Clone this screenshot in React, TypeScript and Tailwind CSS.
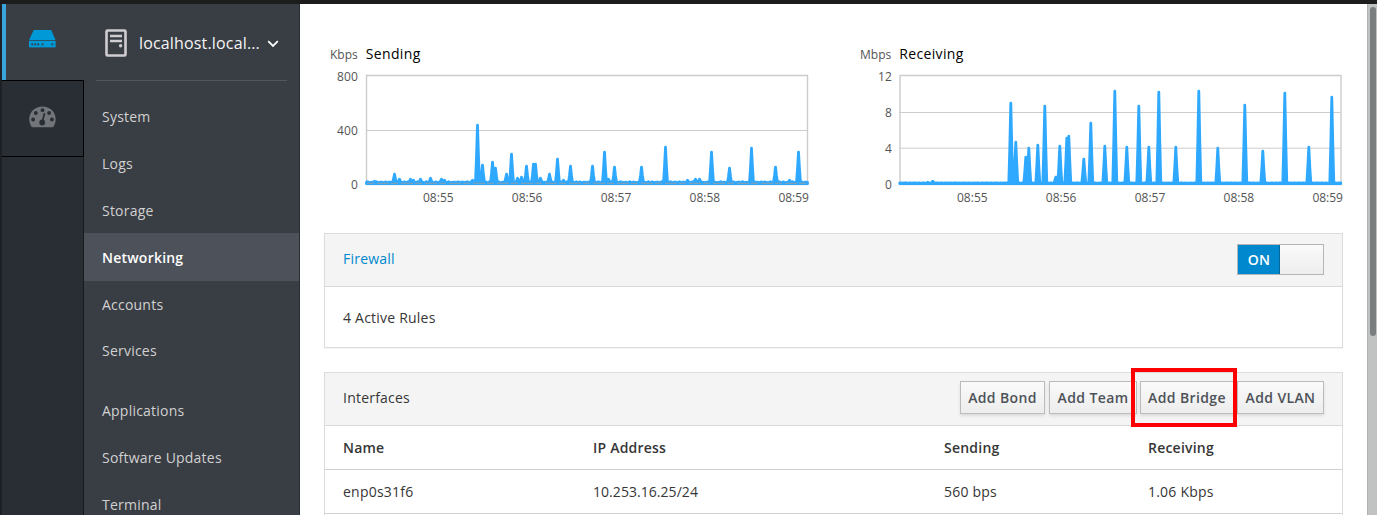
import React from "react";

const NAV = [
  ["System", 0], ["Logs", 0], ["Storage", 0], ["Networking", 0], ["Accounts", 0], ["Services", 1],
  ["Applications", 0], ["Software Updates", 0], ["Terminal", 0],
] as const;

type Spike = [number, number];

const SEND: Spike[] = [
  [8, 2], [28, 9], [33, 4], [44, 4], [47, 3], [54, 4], [64, 5], [75, 4], [78, 3], [106, 3], [111, 58], [116, 18], [126, 21], [129, 15], [140, 9], [145, 29], [151, 5], [155, 6], [160, 17], [167, 19], [169, 19], [174, 5],
  [183, 9], [191, 24], [197, 3], [204, 17], [238, 31], [242, 4], [226, 17], [248, 16], [275, 16], [299, 36], [321, 3], [329, 4], [333, 4], [345, 31], [363, 15], [385, 35], [409, 16], [423, 3], [432, 31],
];
const RECV: Spike[] = [
  [28, 1], [33, 2], [111, 80], [116, 41], [126, 26], [129, 35], [138, 38], [145, 77], [156, 6], [160, 37], [167, 45], [169, 47], [184, 24], [191, 60], [205, 37], [215, 92], [227, 36], [239, 77], [249, 36], [259, 91], [276, 36], [299, 92], [318, 35], [345, 78], [363, 32], [385, 90], [409, 36], [432, 86],
];

function trace(spikes: Spike[], noise: number) {
  let d = "M0 108";
  for (let x = 0; x <= 441; x++) {
    let h = noise * (0.5 + 0.5 * Math.sin(x * 1.7) * Math.cos(x * 0.31));
    for (const [p, a] of spikes) {
      const k = Math.abs(x - p);
      if (k < 2) h = Math.max(h, a * (k === 0 ? 1 : 0.45));
    }
    d += `L${x} ${(107.5 - h).toFixed(1)}`;
  }
  return d + "V108Z";
}

function Chart({ unit, title, ticks, spikes, noise, wide }: {
  unit: string; title: string; ticks: string[]; spikes: Spike[]; noise: number; wide: boolean;
}) {
  return (
    <div className="flex h-[170px] flex-col">
      <div className={`flex h-[20px] items-center gap-2 ${wide ? "w-[483px]" : "w-[479px]"}`}>
        <span className="pt-px text-[12px] tracking-normal text-[#545454]">{unit}</span>
        <span className="-mt-px text-[14px] tracking-[0.35px] text-black">{title}</span>
      </div>
      <div className="mt-[10px] flex h-[110px]">
        <div className={`-mt-[5px] flex h-[124px] shrink-0 flex-col justify-between text-right text-[12px] leading-4 tracking-[0.1px] text-[#545454] ${wide ? "w-[39px] pr-[7px]" : "w-[36px] pr-2"}`}>
          {ticks.map((t) => <span key={t}>{t}</span>)}
        </div>
        <svg width="443" height="111" className="shrink-0 overflow-visible">
          <path d="M.5 1.5H441.5V110.5H.5Z" fill="none" stroke="#ccc" strokeWidth="1.4" transform={wide ? "translate(.5 0)" : "translate(0 0)"} />
          {ticks.slice(1, -1).map((t, i) => {
            const y = Math.round(((i + 1) * 108) / (ticks.length - 1)) + 1.5 + (wide ? i === 0 ? 1 : 0.7 : 1);
            return <path key={t} d={`M0 ${y}H441.5`} stroke="#ccc" />;
          })}
          <path d={trace(spikes, noise)} transform={wide ? "translate(.8 1.7)" : "translate(.5 1.7)"} fill="#2fa8ff" stroke="#2fa8ff" strokeWidth="2.8" strokeLinejoin="round" />
          {!wide && <path d="M1 109.3H441" stroke="#8c9fa8" strokeWidth="1" strokeDasharray="7 3 12 2" />}
        </svg>
      </div>
      <div className={`mt-[5px] flex h-[18px] justify-between text-[12px] leading-[18px] tracking-normal text-[#545454] ${wide ? "ml-[97px] w-[386px]" : "ml-[93px] w-[386px]"}`}>
        {["08:55", "08:56", "08:57", "08:58", "08:59"].map((t) => <span key={t}>{t}</span>)}
      </div>
    </div>
  );
}

function Btn({ children, className }: { children: React.ReactNode; className: string }) {
  return (
    <button className={`flex h-[33px] items-center justify-center border border-[#bbb] bg-linear-to-b from-[#fafafa] to-[#ededed] text-[14px] font-semibold tracking-[0.38px] whitespace-nowrap text-[#4d5258] shadow-[0_2px_3px_rgba(3,3,3,0.1)] ${className}`}>
      {children}
    </button>
  );
}

export default function App() {
  return (
    <div className="flex h-[515px] w-[1377px] flex-col overflow-hidden bg-white font-['Open_Sans',sans-serif] text-[14px] tracking-[0.22px] text-[#363636]">
      <div className="h-[4px] shrink-0 bg-[#1d1d1e]" />
      <div className="flex h-[511px]">
        <aside className="flex w-[300px] shrink-0 border-r border-l-2 border-r-[#292e34] border-l-[#1d2024] bg-[#393d44]">
          <div className="flex w-[82px] flex-col">
            <div className="flex h-[76px] items-center border-l-4 border-[#39a5dc] pb-[5px] pl-[23px]">
              <svg width="27" height="18" viewBox="0 0 27 18" fill="#0099d8" className="-mt-px">
                <path d="M4.7 0H22.2L26.6 10.2H0Z" />
                <path d="M0 11H26.6V17.4H0Z" />
                <path d="M2.3 13.4h1.9v1.8H2.3zM5.2 13.4h1.9v1.8H5.2zM8.2 13.4h1.9v1.8H8.2zM12.6 13.4h1.9v1.8h-1.9zM22.4 13.4h1.9v1.8h-1.9z" fill="#393d44" />
              </svg>
            </div>
            <div className="flex h-[77px] items-center border-y border-r border-black bg-[#292e34] pb-[4px] pl-[27px]">
              <svg width="27" height="22" viewBox="0 0 27 22">
                <path d="M3 21.3C-1.6 15 0 7.3 4.8 3.6C10 -.6 17-.6 22.2 3.6C27 7.4 28.5 15 24 21.3Z" fill="#72767b" />
                <g fill="#292e34"><circle cx="4.1" cy="13.5" r="1.9" /><circle cx="6.8" cy="7" r="1.9" /><circle cx="13.5" cy="4.2" r="1.9" /><circle cx="20.1" cy="7" r="1.9" /><circle cx="22.9" cy="13.5" r="1.9" /><circle cx="13.2" cy="16.5" r="2.9" /></g>
                <path d="M13.2 16L15.4 7.8" stroke="#292e34" strokeWidth="1.7" strokeLinecap="round" />
              </svg>
            </div>
            <div className="flex-1 border-r border-[#17191c] bg-[#292e34]" />
          </div>
          <div className="w-[215px]">
            <div className="ml-3 flex h-[77px] w-[191px] items-center border-b border-[#53565d] pt-[2px] pl-[9px]">
              <svg width="22" height="28" viewBox="0 0 22 28" fill="none" stroke="#d0cdd0" className="shrink-0">
                <rect x="1.5" y="1.5" width="19" height="25" rx="1" strokeWidth="2.6" />
                <path d="M5 7H17M5 12H17" strokeWidth="2.4" />
                <circle cx="15.6" cy="16.8" r="1.7" fill="#d0cdd0" stroke="none" />
              </svg>
              <span className="ml-3 w-[122px] shrink-0 text-[16px] tracking-[0.16px] whitespace-nowrap text-[#f5f5f5]">localhost.local...</span>
              <svg width="12" height="8" viewBox="0 0 12 8" className="mt-px ml-[6px] shrink-0"><path d="M1.2 1.2L6 6L10.8 1.2" fill="none" stroke="white" strokeWidth="1.8" /></svg>
            </div>
            <nav className="pt-[12px]">
              {NAV.map(([t, gap]) => (
                <div key={t} className={`flex items-center pl-[18px] ${gap ? "mb-[13px]" : ""} ${t === "Storage" ? "pt-px" : ""} ${t === "Networking" ? "h-[47.4px] bg-[#4d5159] pt-px font-semibold text-white" : "h-[46.8px] text-[#d1d1d1]"}`}>{t}</div>
              ))}
            </nav>
          </div>
        </aside>
        <main className="flex w-[1067px] shrink-0 flex-col pl-[24px]">
          <div className="flex h-[229px] shrink-0 pt-[40px] pl-[6px]">
            <div className="w-[530px]"><Chart unit="Kbps" title="Sending" ticks={["800", "400", "0"]} spikes={SEND} noise={1.6} wide={false} /></div>
            <Chart unit="Mbps" title="Receiving" ticks={["12", "8", "4", "0"]} spikes={RECV} noise={0.3} wide />
          </div>
          <section className="h-[115px] w-[1019px] shrink-0 border border-[#dcdcdc] shadow-[0_1px_1px_rgba(0,0,0,0.04)]">
            <header className="flex h-[53px] items-center justify-between border-b border-[#d9d9d9] bg-[#f4f4f4] px-[18px]">
              <a className="-mt-[4px] text-[#0088ce]">Firewall</a>
              <div className="-mt-px flex h-[31px] w-[87px] border border-[#b5b5b5] bg-linear-to-b from-[#fafafa] to-[#ededed] font-semibold text-white">
                <span className="flex w-[42px] items-center justify-center border-r border-[#00659c] bg-[#0088ce] pl-px">ON</span>
              </div>
            </header>
            <div className="flex h-[60px] items-center pl-[18px]">4 Active Rules</div>
          </section>
          <section className="mt-[24px] h-[160px] w-[1019px] shrink-0 border border-[#dcdcdc]">
            <header className="flex h-[53px] items-center border-b border-[#d9d9d9] bg-[#f4f4f4] pl-[18px]">
              <span className="-mt-[3px] w-[617px]">Interfaces</span>
              <div className="-mt-[3px] flex">
                <Btn className="mr-1 w-[85px]">Add Bond</Btn>
                <Btn className="mr-[3px] w-[88px]">Add Team</Btn>
                <div className="relative">
                  <Btn className="w-[94px]">Add Bridge</Btn>
                  <div className="absolute -top-[13px] -left-[9px] z-10 h-[59px] w-[106px] border-4 border-[#ff0000]" />
                </div>
                <Btn className="ml-[3px] w-[87px]">Add VLAN</Btn>
              </div>
            </header>
            <div className="grid h-[44px] grid-cols-[250px_351px_204px_194px] items-center border-b border-[#d1d1d1] pl-[18px] font-semibold">
              <span>Name</span><span>IP Address</span><span>Sending</span><span>Receiving</span>
            </div>
            <div className="grid h-[44px] grid-cols-[250px_351px_204px_194px] items-center border-b border-[#d1d1d1] pl-[18px]">
              <span>enp0s31f6</span><span className="tracking-[0.05px]">10.253.16.25/24</span><span>560 bps</span><span>1.06 Kbps</span>
            </div>
          </section>
        </main>
        <div className="flex w-[10px] shrink-0 border-l border-[#b0b1b1] bg-[#c1c3c3] pt-[3px] pl-[2px]">
          <div className="h-[329px] w-[6px] rounded-full bg-[#7a7e7f]" />
        </div>
      </div>
    </div>
  );
}
